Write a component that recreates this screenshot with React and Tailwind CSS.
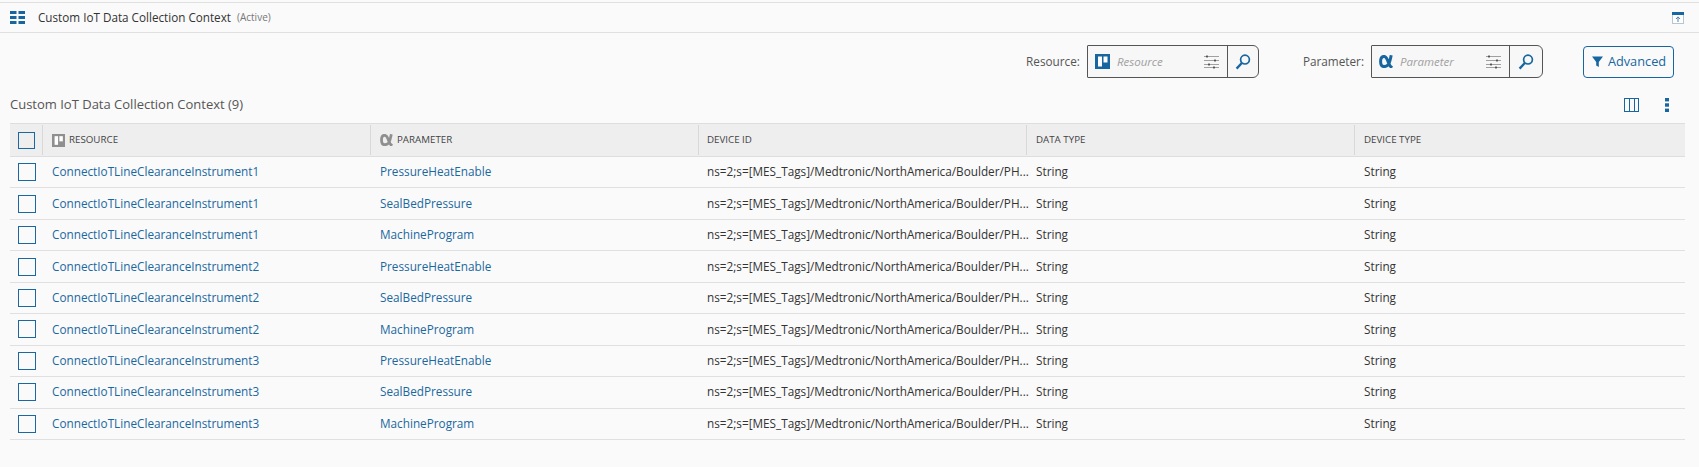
import React from "react";

const LINK = "text-[#1a689f]";
const cols = "grid grid-cols-[33px_328px_328px_328px_328px_330px]";
const DEVICE = "ns=2;s=[MES_Tags]/Medtronic/NorthAmerica/Boulder/PH...";

const rows = [
  ["ConnectIoTLineClearanceInstrument1", "PressureHeatEnable"],
  ["ConnectIoTLineClearanceInstrument1", "SealBedPressure"],
  ["ConnectIoTLineClearanceInstrument1", "MachineProgram"],
  ["ConnectIoTLineClearanceInstrument2", "PressureHeatEnable"],
  ["ConnectIoTLineClearanceInstrument2", "SealBedPressure"],
  ["ConnectIoTLineClearanceInstrument2", "MachineProgram"],
  ["ConnectIoTLineClearanceInstrument3", "PressureHeatEnable"],
  ["ConnectIoTLineClearanceInstrument3", "SealBedPressure"],
  ["ConnectIoTLineClearanceInstrument3", "MachineProgram"],
];

function ResourceIcon({ color, size = 15 }) {
  return (
    <svg width={size} height={size} viewBox="0 0 15 15" className="shrink-0">
      <rect width="15" height="15" fill={color} />
      <rect x="3" y="2.5" width="4" height="10" fill="#fff" />
      <rect x="8.5" y="2.5" width="4" height="6" fill="#fff" />
    </svg>
  );
}

function AlphaIcon({ color, w = 14, h = 13 }) {
  return (
    <svg width={w} height={h} viewBox="0 0 14 13" className="shrink-0" fill="none">
      <path d="M12.2 0.2 C11.4 4.5 10.4 7.8 9.4 9.4 C8.2 11.2 6.8 11.6 5 11.6 C2.8 11.6 1.6 9.4 1.6 6.5 C1.6 3.4 2.8 1.4 5 1.4 C7.4 1.4 8.2 3.8 9.2 7 C10 9.6 10.8 11.4 13.2 12.8" stroke={color} strokeWidth="3" />
    </svg>
  );
}

function Sliders() {
  return (
    <svg width="15" height="14" viewBox="0 0 15 14" className="shrink-0" fill="none">
      <path d="M0 1.5H15M0 5.5H15M0 9.5H15M0 12.5H15" stroke="#a0a0a0" />
      <path d="M3 0.5V2.5M11 4.5V6.5M5 8.5V10.5M10 11.5V13.5" stroke="#333" strokeWidth="1.4" />
    </svg>
  );
}

function Search() {
  return (
    <svg width="16" height="16" viewBox="0 0 16 16" fill="none" stroke="#17669f" className="shrink-0">
      <circle cx="10" cy="5.6" r="4.4" strokeWidth="1.7" />
      <path d="M6.8 9L1.6 14.6" strokeWidth="2.3" />
    </svg>
  );
}

function Picker({ label, placeholder, icon, boxW, inputW }) {
  return (
    <div className="flex items-center">
      <span className="text-[11.75px] text-[#555] mr-[7px]">{label}</span>
      <div className={`flex h-[33px] border border-[#555] rounded-r-[6px] rounded-l-[1px] bg-[#f7f7f7] ${boxW}`}>
        <div className={`flex items-center pl-[7px] pr-[8px] border-r border-[#555] ${inputW}`}>
          {icon}
          <span className="ml-[7px] flex-1 text-[11.5px] italic text-[#a0a0a0]">{placeholder}</span>
          <Sliders />
        </div>
        <div className="flex-1 flex items-center justify-center">
          <Search />
        </div>
      </div>
    </div>
  );
}

function HeadCell({ icon, children, last, pad = "pl-[9px]" }) {
  return (
    <div className={`flex items-center gap-[4px] ${pad} text-[9.75px] text-[#444] uppercase ${last ? "" : "border-r border-[#d8d8d8] my-[1px]"}`}>
      {icon}
      <span>{children}</span>
    </div>
  );
}

export default function App() {
  return (
    <div className="min-h-[467px] bg-[#fafafa] pt-[2px] text-[11.75px] text-[#333] [font-family:'Open_Sans',sans-serif]">
      <header className="flex items-center h-[31px] border-y-[1px] border-[#e0e0e0] pl-[10px] pr-[15px]">
        <svg width="15" height="13" viewBox="0 0 15 13" fill="#17669f" className="shrink-0">
          <rect x="0" y="0" width="6.5" height="3" />
          <rect x="8.5" y="0" width="6.5" height="3" />
          <rect x="0" y="5" width="6.5" height="3" />
          <rect x="8.5" y="5" width="6.5" height="3" />
          <rect x="0" y="10" width="6.5" height="3" />
          <rect x="8.5" y="10" width="6.5" height="3" />
        </svg>
        <span className="ml-[13px] text-[11.7px] text-[#333]">Custom IoT Data Collection Context</span>
        <span className="ml-[6px] text-[10px] text-[#777]">(Active)</span>
        <svg width="12" height="12" viewBox="0 0 12 12" className="ml-auto shrink-0">
          <rect x="0.5" y="0.5" width="11" height="11" fill="#fff" stroke="#b5c6d4" />
          <rect x="0" y="0" width="12" height="3" fill="#17669f" />
          <path d="M6 10V5M4 7L6 4.8L8 7" stroke="#5b7fa8" fill="none" />
        </svg>
      </header>

      <div className="flex items-center justify-end h-[33px] mt-[12px] pr-[25px]">
        <Picker label="Resource:" placeholder="Resource" boxW="w-[172px]" inputW="w-[140px]" icon={<ResourceIcon color="#17669f" />} />
        <div className="w-[44px]" />
        <Picker label="Parameter:" placeholder="Parameter" boxW="w-[172px]" inputW="w-[138px]" icon={<AlphaIcon color="#17669f" />} />
        <div className="w-[40px]" />
        <button className="flex items-center justify-center w-[91px] h-[32px] border border-[#17669f] rounded-[4px] text-[12.75px] text-[#17669f]">
          <svg width="11" height="11" viewBox="0 0 11 11" fill="#17669f" className="mr-[5px] ml-[1px]">
            <path d="M0 0.5H11L6.8 6V11L4.2 9.5V6Z" />
          </svg>
          Advanced
        </button>
      </div>

      <div className="flex items-center justify-between h-[29px] mt-[12px] mb-[4px] pl-[10px] pr-[30px]">
        <span className="text-[13px] text-[#555]">Custom IoT Data Collection Context (9)</span>
        <div className="flex items-center gap-[26px]">
          <svg width="15" height="14" viewBox="0 0 15 14" fill="none" stroke="#17669f">
            <rect x="0.5" y="0.5" width="14" height="13" />
            <path d="M5.5 0V14M10.5 0V14" />
          </svg>
          <svg width="4" height="14" viewBox="0 0 4 14" fill="#17669f">
            <rect x="0" y="0" width="4" height="3.4" />
            <rect x="0" y="5.3" width="4" height="3.4" />
            <rect x="0" y="10.6" width="4" height="3.4" />
          </svg>
        </div>
      </div>

      <div className="mx-[10px] w-[1675px]">
        <div className={`${cols} h-[34px] bg-[#eeeeee] border-y border-[#dedede]`}>
          <div className="flex items-center pl-[8px] border-r border-[#d8d8d8] my-[1px]">
            <div className="w-[17px] h-[17px] border border-[#1a689f]" />
          </div>
          <HeadCell icon={<ResourceIcon color="#8f8f8f" size={13} />}>Resource</HeadCell>
          <HeadCell icon={<AlphaIcon color="#8f8f8f" w={13} h={12} />}>Parameter</HeadCell>
          <HeadCell pad="pl-[8px]">Device ID</HeadCell>
          <HeadCell>Data Type</HeadCell>
          <HeadCell last>Device Type</HeadCell>
        </div>
        {rows.map(([res, par], i) => (
          <div key={i} className={`${cols} h-[31.44px] border-b border-[#e0e0e0] items-center`}>
            <div className="pl-[8px] flex items-center">
              <div className="w-[18px] h-[18px] border border-[#1a689f]" />
            </div>
            <div className={`pl-[9px] ${LINK}`}>{res}</div>
            <div className={`pl-[9px] ${LINK}`}>{par}</div>
            <div className="pl-[8px] whitespace-nowrap text-[#333]">{DEVICE}</div>
            <div className="pl-[9px] text-[#333]">String</div>
            <div className="pl-[9px] text-[#333]">String</div>
          </div>
        ))}
      </div>
    </div>
  );
}
